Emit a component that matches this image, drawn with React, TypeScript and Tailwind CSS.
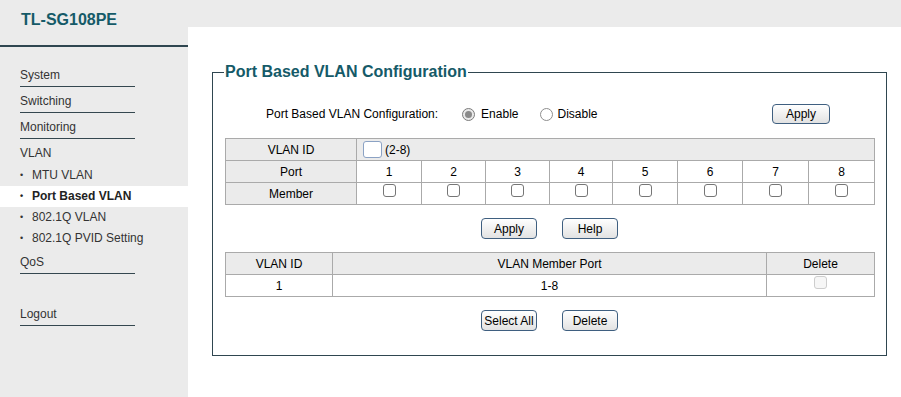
import React from "react";

function Btn({ label, w = "w-[56px]", h = "h-[21px]" }: { label: string; w?: string; h?: string }) {
  return (
    <div
      className={`${w} ${h} flex items-center justify-center border border-[#3f5f80] rounded-[4px] bg-linear-to-b from-white to-[#e2e2e2] text-[12px] leading-none text-black`}
    >
      {label}
    </div>
  );
}

function Check({ disabled = false }: { disabled?: boolean }) {
  return (
    <span
      className={
        disabled
          ? "block w-[13px] h-[13px] rounded-[3px] border border-[#cdcdcd] bg-[#f6f6f6]"
          : "block w-[13px] h-[13px] rounded-[3px] border border-[#767676] bg-white"
      }
    />
  );
}

function Radio({ checked }: { checked: boolean }) {
  return checked ? (
    <span className="flex items-center justify-center w-[13px] h-[13px] rounded-full border border-[#7b7b7b] bg-[#e9e9e9]">
      <span className="block w-[7px] h-[7px] rounded-full bg-[#8a8a8a]" />
    </span>
  ) : (
    <span className="block w-[13px] h-[13px] rounded-full border border-[#8e8e8e] bg-white" />
  );
}

function NavMain({ label, pt = "pt-[7px]", border = true, pb = "pb-[4px]" }: { label: string; pt?: string; border?: boolean; pb?: string }) {
  return (
    <div className={`ml-[20px] w-[115px] ${pt} ${pb} leading-[14px] text-[12px] text-[#333] ${border ? "border-b border-[#34474f]" : ""}`}>
      {label}
    </div>
  );
}

function NavSub({ label, active = false }: { label: string; active?: boolean }) {
  return (
    <div
      className={`h-[21px] leading-[21px] pl-[20px] text-[12px] flex ${active ? "bg-white font-bold text-[#222]" : "text-[#333]"}`}
    >
      <span className="inline-block w-[12px] text-[9px]">•</span>
      <span>{label}</span>
    </div>
  );
}

const cell = "h-[22px] border-r border-b border-[#aaaaaa] flex items-center justify-center";

export default function App() {
  const ports = [1, 2, 3, 4, 5, 6, 7, 8];
  return (
    <div className="w-[901px] h-[397px] overflow-hidden flex bg-[#ebebeb] font-['Liberation_Sans',Arial,sans-serif] text-black">
      {/* Sidebar */}
      <div className="w-[188px] shrink-0 bg-[#ebebeb]">
        <div className="h-[47px] pl-[21px] pt-[10px] border-b-2 border-[#2f4650]">
          <div className="text-[16px] font-bold leading-[20px] text-[#155a68]">TL-SG108PE</div>
        </div>
        <div className="pt-[14px]">
          <NavMain label="System" />
          <NavMain label="Switching" />
          <NavMain label="Monitoring" />
          <NavMain label="VLAN" border={false} pb="pb-[5px]" />
          <NavSub label="MTU VLAN" />
          <NavSub label="Port Based VLAN" active />
          <NavSub label="802.1Q VLAN" />
          <NavSub label="802.1Q PVID Setting" />
          <NavMain label="QoS" pt="pt-[6px]" />
          <NavMain label="Logout" pt="pt-[33px]" />
        </div>
      </div>

      {/* Content */}
      <div className="flex-1 mt-[27px] bg-white pl-[24px] pr-[14px] pt-[36px]">
        <fieldset className="border border-[#2f4650] pb-[24px]">
          <legend className="ml-[11px] px-px text-[16px] font-bold leading-[18px] text-[#155a68]">
            Port Based VLAN Configuration
          </legend>

          <div className="mt-[23px] h-[20px] flex items-center pl-[53px] pr-[56px] text-[12px]">
            <span>Port Based VLAN Configuration:</span>
            <span className="ml-[24px]"><Radio checked /></span>
            <span className="ml-[6px]">Enable</span>
            <span className="ml-[22px]"><Radio checked={false} /></span>
            <span className="ml-[4px]">Disable</span>
            <div className="ml-auto">
              <Btn label="Apply" w="w-[58px]" h="h-[20px]" />
            </div>
          </div>

          <div className="mt-[14px] ml-[12px] w-[650px] grid grid-cols-[131px_65px_64px_64px_63px_65px_65px_66px_minmax(0,1fr)] border-l border-t border-[#aaaaaa] text-[12px]">
            <div className={`${cell} bg-[#ebebeb]`}>VLAN ID</div>
            <div className={`${cell} col-span-8 bg-[#ebebeb] !justify-start pl-[6px]`}>
              <span className="block w-[19px] h-[17px] border border-[#8ba2c4] rounded-[3px] bg-white" />
              <span className="ml-[3px]">(2-8)</span>
            </div>

            <div className={`${cell} bg-[#ebebeb]`}>Port</div>
            {ports.map((p) => (
              <div key={`p${p}`} className={`${cell} bg-white`}>{p}</div>
            ))}

            <div className={`${cell} bg-[#ebebeb]`}>Member</div>
            {ports.map((p) => (
              <div key={`m${p}`} className="h-[22px] border-r border-b border-[#aaaaaa] flex items-start justify-center pt-[1px] bg-white">
                <Check />
              </div>
            ))}
          </div>

          <div className="mt-[13px] flex justify-center gap-[25px]">
            <Btn label="Apply" />
            <Btn label="Help" />
          </div>

          <div className="mt-[13px] ml-[12px] w-[650px] grid grid-cols-[107px_434px_minmax(0,1fr)] border-l border-t border-[#aaaaaa] text-[12px]">
            <div className={`${cell} bg-[#ebebeb]`}>VLAN ID</div>
            <div className={`${cell} bg-[#ebebeb]`}>VLAN Member Port</div>
            <div className={`${cell} bg-[#ebebeb]`}>Delete</div>
            <div className={`${cell} bg-white`}>1</div>
            <div className={`${cell} bg-white`}>1-8</div>
            <div className="h-[22px] border-r border-b border-[#aaaaaa] flex items-start justify-center pt-[1px] bg-white">
              <Check disabled />
            </div>
          </div>

          <div className="mt-[13px] flex justify-center gap-[25px]">
            <Btn label="Select All" />
            <Btn label="Delete" />
          </div>
        </fieldset>
      </div>
    </div>
  );
}
